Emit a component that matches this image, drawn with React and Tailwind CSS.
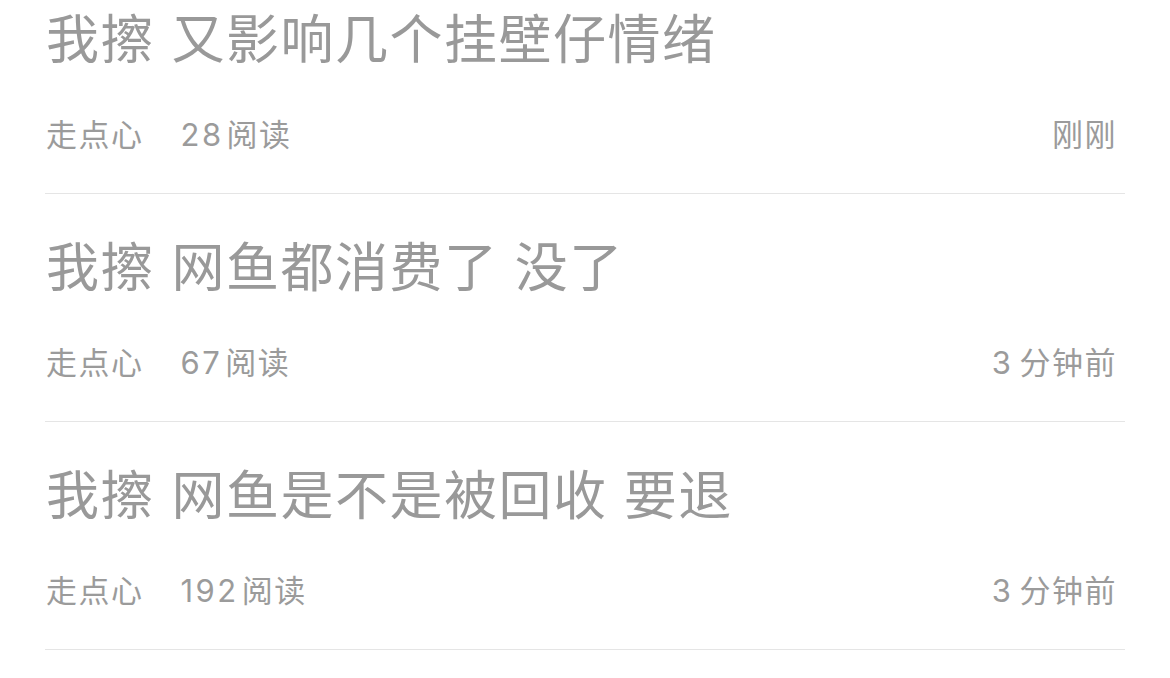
const items = [
  { title: "我擦 又影响几个挂壁仔情绪", author: "走点心", reads: "28", time: "", timeText: "刚刚" },
  { title: "我擦 网鱼都消费了 没了", author: "走点心", reads: "67", time: "3", timeText: "分钟前" },
  { title: "我擦 网鱼是不是被回收 要退", author: "走点心", reads: "192", time: "3", timeText: "分钟前" },
];

const App = () => {
  return (
    <div
      className="min-h-screen w-full bg-white px-[45px]"
      style={{ fontFamily: 'Inter, "Noto Sans CJK SC", "Noto Sans", sans-serif' }}
    >
      {items.map((item, i) => (
        <div
          key={i}
          className={`border-b border-[#e5e5e5] pb-[38px] ${i === 0 ? "pt-[10px]" : "pt-[44px]"}`}
        >
          <div className="h-[60px] whitespace-nowrap pl-[1px] text-[53px] leading-[60px] tracking-[1.5px] text-[#999999]">
            {item.title}
          </div>
          <div className="mt-[45px] flex h-[40px] items-center justify-between pl-[1px] pr-[8px] text-[31px] leading-[40px] tracking-[1.5px] text-[#9b9b9b]">
            <div className="flex items-center">
              <span>{item.author}</span>
              <span className="ml-[37px]">
                <span className="mr-[3px] tracking-[2.5px]">{item.reads}</span>
                阅读
              </span>
            </div>
            <span>
              {item.time && <span className="mr-[7px]">{item.time}</span>}
              {item.timeText}
            </span>
          </div>
        </div>
      ))}
    </div>
  );
};

export default App;
